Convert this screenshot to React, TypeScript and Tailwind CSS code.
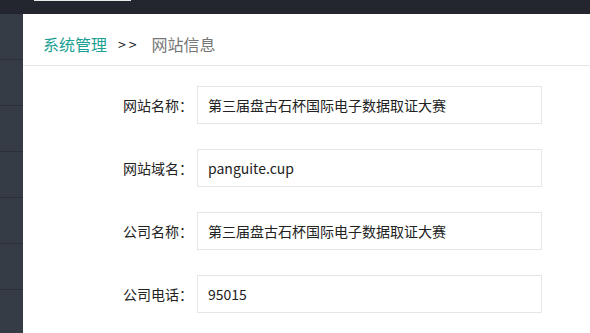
import React from "react";

const fields = [
  { label: "网站名称：", value: "第三届盘古石杯国际电子数据取证大赛" },
  { label: "网站域名：", value: "panguite.cup" },
  { label: "公司名称：", value: "第三届盘古石杯国际电子数据取证大赛" },
  { label: "公司电话：", value: "95015" },
];

const App = () => {
  return (
    <div className="w-[590px] h-[333px] overflow-hidden flex flex-col bg-white font-['Noto_Sans_CJK_SC',sans-serif]">
      {/* top bar */}
      <div className="h-[14px] shrink-0 bg-[#23262e]">
        <div className="ml-[34px] w-[97px] h-px bg-[#e8e8e8]" />
      </div>
      <div className="flex flex-1">
        {/* side menu */}
        <div className="w-[23px] shrink-0 bg-[#363c46]">
          {[0, 1, 2, 3, 4, 5, 6].map((i) => (
            <div key={i} className="h-[46px] border-b border-[#2b3038]" />
          ))}
        </div>
        <main className="flex-1">
          <div className="h-[52px] border-b border-[#e6e6e6] pl-[20px] pt-[18px] flex items-start text-[16px] leading-[24px]">
            <span className="text-[#1aa094]">系统管理</span>
            <span className="text-[#111] text-[14px] ml-[11px] tracking-[3px]">&gt;&gt;</span>
            <span className="text-[#777] ml-[12px]">网站信息</span>
          </div>
          <div className="pt-[20px] flex flex-col gap-[25px]">
            {fields.map((f) => (
              <div key={f.label} className="flex items-center">
                <label className="w-[170px] text-right text-[14px] text-[#222]">{f.label}</label>
                <div className="ml-[4px] w-[345px] h-[38px] border border-[#e6e6e6] pl-[10px] flex items-center text-[14px] text-[#222]">
                  {f.value}
                </div>
              </div>
            ))}
          </div>
        </main>
      </div>
    </div>
  );
};

export default App;
